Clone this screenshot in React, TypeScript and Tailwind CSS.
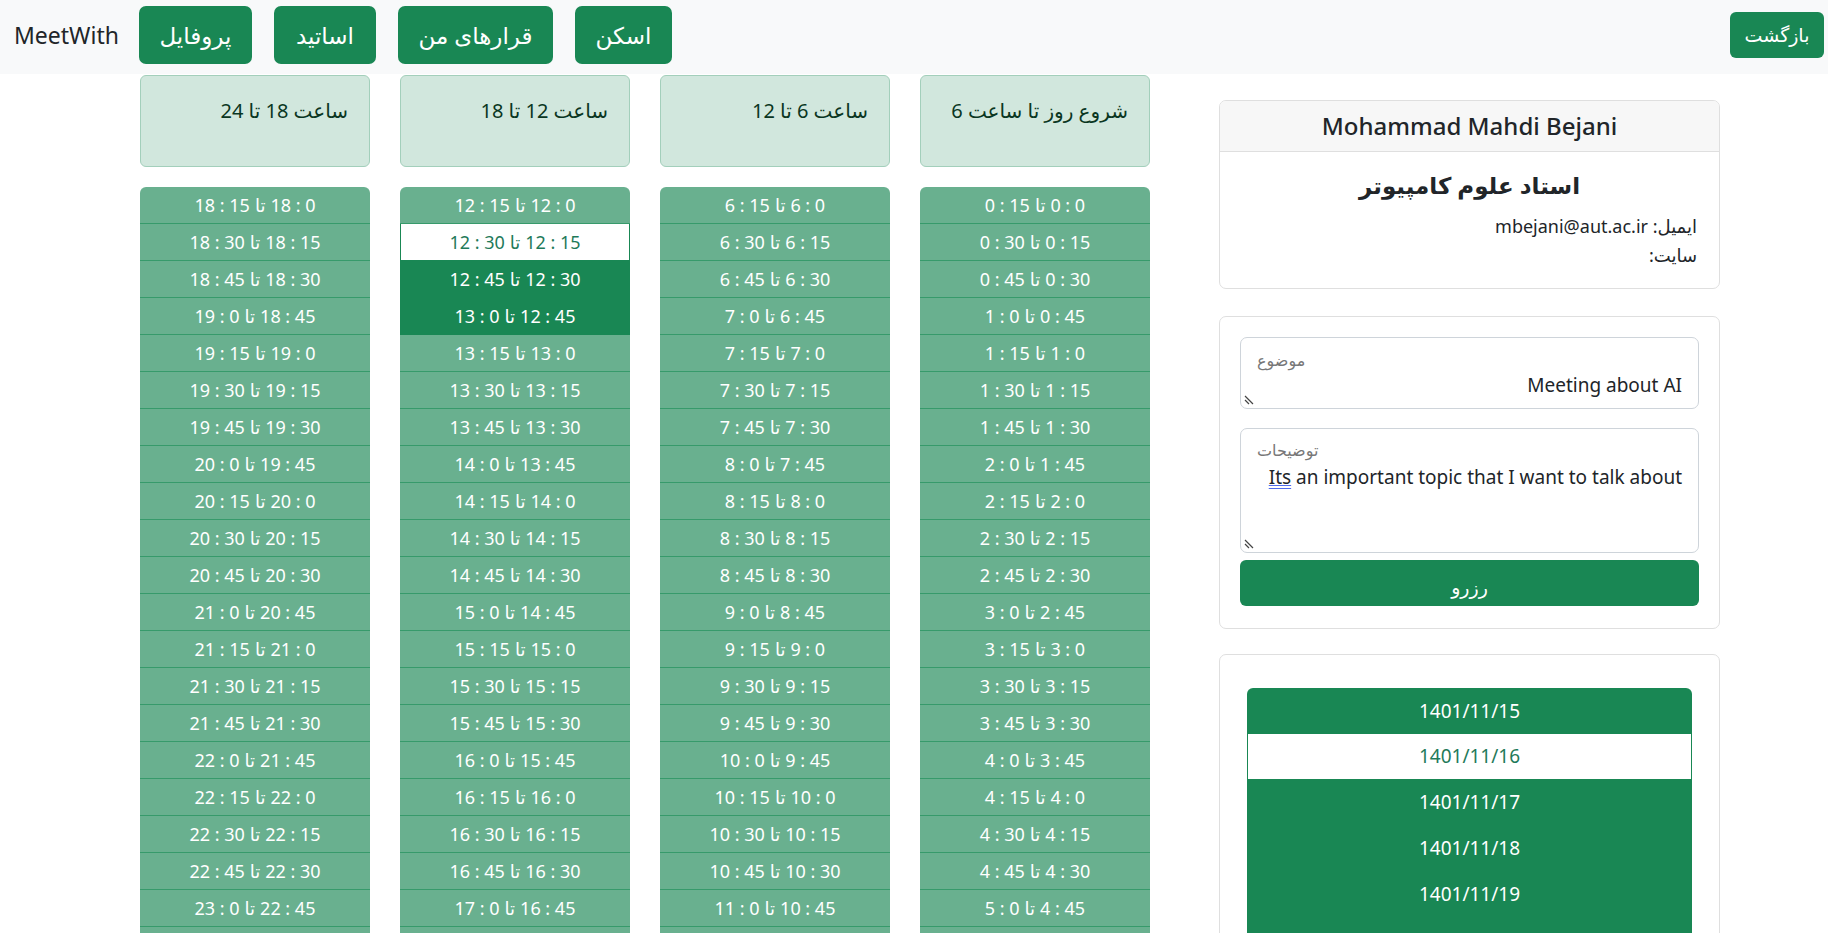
import React from 'react';

type SlotState = 'off' | 'free' | 'picked';

interface Column {
	title: string;
	from: number;
}

const COLUMNS: Column[] = [
	{ title: 'شروع روز تا ساعت 6', from: 0 },
	{ title: 'ساعت 6 تا 12', from: 6 },
	{ title: 'ساعت 12 تا 18', from: 12 },
	{ title: 'ساعت 18 تا 24', from: 18 },
];

const DATES = ['1401/11/15', '1401/11/16', '1401/11/17', '1401/11/18', '1401/11/19', '1401/11/20', '1401/11/21'];

const FONT = "font-['Noto_Sans','DejaVu_Sans',sans-serif]";

const hm = (t: number) => `${Math.floor(t / 60)} : ${t % 60}`;

function slotsFor(from: number) {
	const out: { start: string; end: string; state: SlotState }[] = [];
	for (let i = 0; i < 24; i++) {
		const start = from * 60 + i * 15;
		let state: SlotState = 'off';
		if (from === 12 && i === 1) state = 'free';
		if (from === 12 && (i === 2 || i === 3)) state = 'picked';
		out.push({ start: hm(start), end: hm(start + 15), state });
	}
	return out;
}

function Grip() {
	return (
		<svg className="absolute left-[3px] bottom-[3px]" width="10" height="10" viewBox="0 0 10 10">
			<path d="M1 1 L9 9 M1 5 L5 9" stroke="#444" strokeWidth="1.2" fill="none" />
		</svg>
	);
}

const ROW = 'h-[37px] flex items-center justify-center gap-[5px] text-[18px]';

function TimeColumn({ col }: { col: Column }) {
	return (
		<div className="w-[230px] flex flex-col">
			<div
				dir="rtl"
				className="h-[92px] bg-[#d1e7dd] border border-[#a3cfbb] rounded-[6px] text-[#0a3622] text-[20px] leading-[29px] pt-[20px] pr-[21px] text-right">
				{col.title}
			</div>
			<div className="mt-[20px] rounded-[6px] overflow-hidden">
				{slotsFor(col.from).map((s, i) => (
					<div
						key={i}
						dir="ltr"
						className={
							s.state === 'off'
								? `${ROW} text-white bg-[#69b08f] border-b border-[#379a6b]`
								: s.state === 'free'
									? `${ROW} text-[#1f7a5a] bg-white border border-t-0 border-[#198754]`
									: `${ROW} text-white bg-[#198754] border-b border-[#198754]`
						}>
						<span>{s.end}</span>
						<span>تا</span>
						<span>{s.start}</span>
					</div>
				))}
			</div>
		</div>
	);
}

export default function App() {
	return (
		<div className={`h-[933px] overflow-hidden bg-white text-[#212529] ${FONT}`}>
			<nav className="h-[74px] bg-[#f8f9fa] flex items-start">
				<span className="ml-[14px] mt-[17px] text-[23px] leading-[36px] text-[#212529]">MeetWith</span>
				<div className="flex gap-[22px] ml-[20px] mt-[6px]">
					<button className="w-[113px] h-[58px] rounded-[7px] bg-[#198754] text-white text-[23px]">پروفایل</button>
					<button className="w-[102px] h-[58px] rounded-[7px] bg-[#198754] text-white text-[23px]">اساتید</button>
					<button className="w-[155px] h-[58px] rounded-[7px] bg-[#198754] text-white text-[23px]">قرارهای من</button>
					<button className="w-[97px] h-[58px] rounded-[7px] bg-[#198754] text-white text-[23px]">اسکن</button>
				</div>
				<button className="ml-auto mr-[4px] mt-[12px] w-[94px] h-[46px] rounded-[6px] bg-[#198754] text-white text-[19px]">
					بازگشت
				</button>
			</nav>

			<div className="flex pl-[140px] pt-px">
				<div className="flex gap-[30px]">
					{[...COLUMNS].reverse().map((c) => (
						<TimeColumn key={c.from} col={c} />
					))}
				</div>

				<aside className="ml-[69px] w-[501px] pt-[25px] flex flex-col">
					<div className="border border-[#dfdfdf] rounded-[7px] overflow-hidden">
						<div className="h-[51px] bg-[#f7f7f7] border-b border-[#dfdfdf] flex items-center justify-center text-[24px] font-medium">
							Mohammad Mahdi Bejani
						</div>
						<div dir="rtl" className="pt-[19px] pb-[18px] px-[22px]">
							<div className="text-center text-[23px] leading-[29px] font-semibold mb-[12px]">استاد علوم کامپیوتر</div>
							<div className="text-[18px] leading-[29px]">ایمیل: mbejani@aut.ac.ir</div>
							<div className="text-[18px] leading-[29px]">سایت:</div>
						</div>
					</div>

					<div className="mt-[27px] border border-[#dfdfdf] rounded-[7px] px-[20px] pt-[20px] pb-[22px] flex flex-col">
						<div className="relative h-[72px] border border-[#ced4da] rounded-[7px]">
							<span className="absolute left-[16px] top-[10px] text-[16px] text-[#777]">موضوع</span>
							<span className="absolute right-[16px] top-[33px] text-[19px] leading-[28px]">Meeting about AI</span>
							<Grip />
						</div>
						<div className="relative h-[125px] mt-[19px] border border-[#ced4da] rounded-[7px]">
							<span className="absolute left-[16px] top-[9px] text-[16px] text-[#777]">توضیحات</span>
							<span className="absolute right-[16px] top-[34px] text-[19px] leading-[28px]">
								<span className="underline decoration-double decoration-[#4f6bed]">Its</span> an important topic that I want
								to talk about
							</span>
							<Grip />
						</div>
						<button className="mt-[7px] h-[46px] rounded-[6px] bg-[#198754] text-white text-[19px] pt-[8px]">رزرو</button>
					</div>

					<div className="mt-[25px] border border-[#dfdfdf] rounded-[7px] px-[27px] pt-[33px] h-[300px]">
						<div className="rounded-t-[6px] overflow-hidden">
							{DATES.map((d, i) => (
								<div
									key={d}
									className={
										i === 1
											? 'h-[45px] flex items-center justify-center text-[19px] bg-white text-[#1f7a5a] border-x border-[#198754]'
											: 'h-[46px] flex items-center justify-center text-[19px] bg-[#198754] text-white'
									}>
									{d}
								</div>
							))}
						</div>
					</div>
				</aside>
			</div>
		</div>
	);
}
